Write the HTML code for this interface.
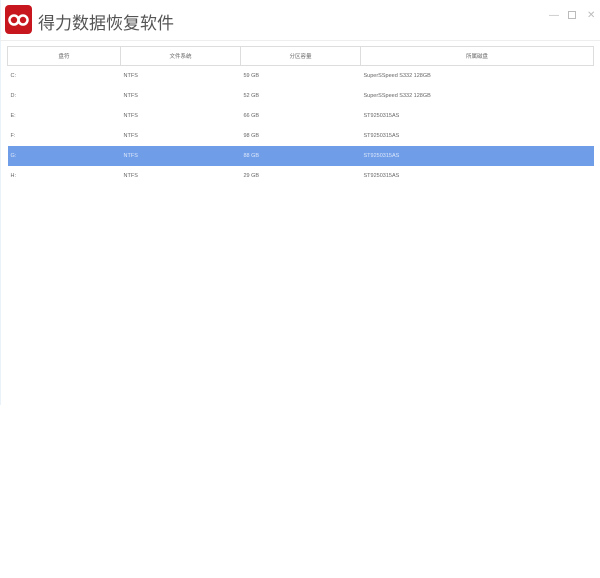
<!DOCTYPE html>
<html><head><meta charset="utf-8"><style>
body{margin:0;width:600px;height:578px;background:#fff;font-family:"Liberation Sans","Noto Sans CJK SC",sans-serif;position:relative;overflow:hidden}
.logo{position:absolute;left:5px;top:5px;width:27px;height:29px;background:#c8161e;border-radius:4px}
.title{position:absolute;left:38px;top:9px;font-size:17px;color:#555}
.ctl{position:absolute;top:10px;font-size:10px;color:#bbb}
.sep{position:absolute;left:0;top:40px;width:600px;height:1px;background:#eee}
table{position:absolute;left:7px;top:46px;width:587px;border-collapse:collapse;table-layout:fixed;font-size:5.5px;color:#666}
th{height:16px;border:1px solid #ddd;font-weight:normal;text-align:center}
td{height:20px;box-sizing:border-box;padding:0 0 0 3px;line-height:20px}
tr.sel td{background:#6f9de8;color:#dfe9fb}
.edge{position:absolute;left:0;top:0;width:1px;height:405px;background:#e8f2f8}
</style></head><body>
<div class="edge"></div>
<div class="logo"><svg width="27" height="29" viewBox="0 0 27 29"><circle cx="9" cy="15" r="4.5" fill="none" stroke="#fff" stroke-width="2.5"/><circle cx="18" cy="15" r="4.5" fill="none" stroke="#fff" stroke-width="2.5"/></svg></div>
<div class="title">得力数据恢复软件</div>
<div class="ctl" style="left:549px">—</div>
<div class="ctl" style="left:568px;top:11px;width:6px;height:6px;border:1.5px solid #bbb"></div>
<div class="ctl" style="left:587px">✕</div>
<div class="sep"></div>
<table>
<colgroup><col style="width:113px"><col style="width:120px"><col style="width:120px"><col></colgroup>
<tr><th>盘符</th><th>文件系统</th><th>分区容量</th><th>所属磁盘</th></tr>
<tr><td>C:</td><td>NTFS</td><td>59 GB</td><td>SuperSSpeed S332 128GB</td></tr>
<tr><td>D:</td><td>NTFS</td><td>52 GB</td><td>SuperSSpeed S332 128GB</td></tr>
<tr><td>E:</td><td>NTFS</td><td>66 GB</td><td>ST9250315AS</td></tr>
<tr><td>F:</td><td>NTFS</td><td>98 GB</td><td>ST9250315AS</td></tr>
<tr class="sel"><td>G:</td><td>NTFS</td><td>88 GB</td><td>ST9250315AS</td></tr>
<tr><td>H:</td><td>NTFS</td><td>29 GB</td><td>ST9250315AS</td></tr>
</table>
</body></html>
